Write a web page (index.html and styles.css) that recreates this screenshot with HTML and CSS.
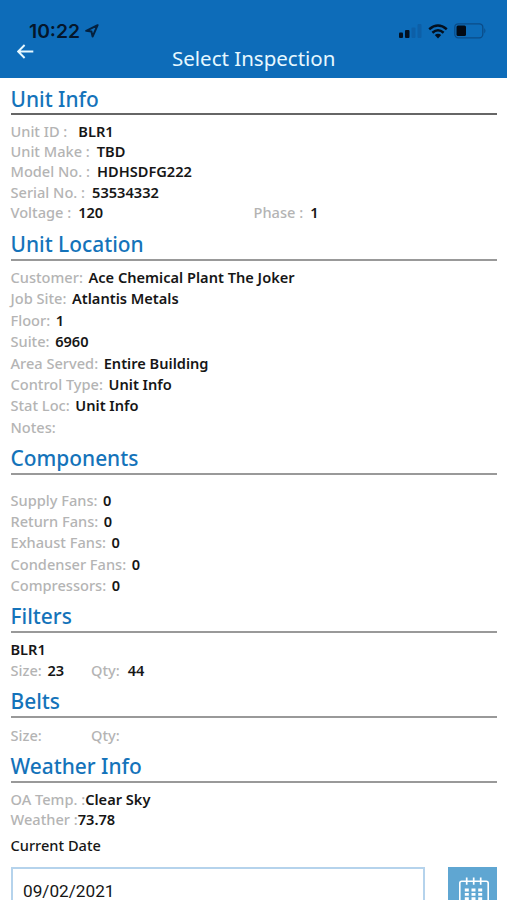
FILE: index.html
```html
<!DOCTYPE html>
<html lang="en">

<head>
    <meta charset="UTF-8">
    <meta name="viewport" content="width=device-width, initial-scale=1.0">
    <title>Select Inspection</title>
    <link rel="stylesheet" href="styles.css">
</head>

<body>
    <header class="header">
        <div class="status-bar">
            <span class="time">10:22</span>
            <svg class="location" width="14" height="14" viewBox="0 0 14 14">
                <path d="M12.6 1.2 L1.2 6.8 L6.4 7.4 L7.6 12.6 Z" fill="none" stroke="#04213f" stroke-width="2" stroke-linejoin="round" />
            </svg>
            <svg class="signal" width="23" height="14" viewBox="0 0 23 14">
                <rect x="0" y="8.5" width="4" height="5.5" rx="1" fill="#03101f" />
                <rect x="6" y="6" width="4.5" height="8" rx="1" fill="#03101f" />
                <rect x="12.5" y="3.5" width="4" height="10.5" rx="1" fill="#0d5fa7" />
                <rect x="18.5" y="0" width="4" height="14" rx="1" fill="#0d5fa7" />
            </svg>
            <svg class="wifi" width="20" height="15" viewBox="0 0 20 15">
                <g fill="none" stroke="#03101f" stroke-width="2.5">
                    <path d="M1.2 5.2 Q10 -2.2 18.8 5.2" />
                    <path d="M4.4 8.7 Q10 3.8 15.6 8.7" />
                </g>
                <path d="M6.8 11.1 Q10 8.6 13.2 11.1 L10 14.4 Z" fill="#03101f" />
            </svg>
            <svg class="battery" width="33" height="16" viewBox="0 0 33 16">
                <rect x="0.8" y="0.8" width="28" height="14" rx="3.5" fill="none" stroke="#0b4c88" stroke-width="1.3" />
                <rect x="2.5" y="2.6" width="9.5" height="10.4" rx="1.5" fill="#020a14" />
                <path d="M30.3 5 Q32.6 7.8 30.3 10.6 Z" fill="#0b4c88" />
            </svg>
        </div>
        <div class="nav-bar">
            <svg class="back" width="17" height="15" viewBox="0 0 17 15">
                <path d="M16.3 7.5 H1.6 M7.6 1 L1.2 7.5 L7.6 14" fill="none" stroke="#e6f8ff" stroke-width="1.9" />
            </svg>
            <h1>Select Inspection</h1>
        </div>
    </header>

    <main class="content">
        <section class="unit-info">
            <h2>Unit Info</h2>
            <p><span>Unit ID :</span><b class="wide">BLR1</b></p>
            <p><span>Unit Make :</span><b>TBD</b></p>
            <p><span>Model No. :</span><b>HDHSDFG222</b></p>
            <p><span>Serial No. :</span><b>53534332</b></p>
            <div class="columns">
                <p><span>Voltage :</span><b>120</b></p>
                <p><span>Phase :</span><b>1</b></p>
            </div>
        </section>

        <section class="unit-location">
            <h2>Unit Location</h2>
            <p><span>Customer:</span><b>Ace Chemical Plant The Joker</b></p>
            <p><span>Job Site:</span><b>Atlantis Metals</b></p>
            <p><span>Floor:</span><b>1</b></p>
            <p><span>Suite:</span><b>6960</b></p>
            <p><span>Area Served:</span><b>Entire Building</b></p>
            <p><span>Control Type:</span><b>Unit Info</b></p>
            <p><span>Stat Loc:</span><b>Unit Info</b></p>
            <p><span>Notes:</span></p>
        </section>

        <section class="components">
            <h2>Components</h2>
            <p><span>Supply Fans:</span><b>0</b></p>
            <p><span>Return Fans:</span><b>0</b></p>
            <p><span>Exhaust Fans:</span><b>0</b></p>
            <p><span>Condenser Fans:</span><b>0</b></p>
            <p><span>Compressors:</span><b>0</b></p>
        </section>

        <section class="filters">
            <h2>Filters</h2>
            <p><b class="title">BLR1</b></p>
            <div class="sizes">
                <p><span>Size:</span><b>23</b></p>
                <p><span>Qty:</span><b class="qty">44</b></p>
            </div>
        </section>

        <section class="belts">
            <h2>Belts</h2>
            <div class="sizes">
                <p><span>Size:</span></p>
                <p><span>Qty:</span></p>
            </div>
        </section>

        <section class="weather">
            <h2>Weather Info</h2>
            <p><span>OA Temp. :</span><b>Clear Sky</b></p>
            <p><span>Weather :</span><b>73.78</b></p>
        </section>

        <div class="date-label">Current Date</div>
        <div class="date-row">
            <div class="date-input">09/02/2021</div>
            <div class="date-button">
                <svg width="32" height="32" viewBox="0 0 32 32">
                    <rect x="1.8" y="5.3" width="28.4" height="26" rx="2" fill="none" stroke="#fff" stroke-width="1.6" />
                    <path d="M8.7 1.5 V8.8 M15.7 1.5 V8.8 M22.7 1.5 V8.8" stroke="#fff" stroke-width="1.7" />
                    <path d="M6.8 14 H24.5 M6.8 18.3 H24.5 M6.8 22.6 H24.5" stroke="#fff" stroke-width="2.8" stroke-dasharray="4 2.7" />
                </svg>
            </div>
        </div>
    </main>
</body>

</html>
```

FILE: styles.css
```css
* {
    box-sizing: border-box;
}

body {
    margin: 0;
    height: 900px;
    overflow: hidden;
    background-color: #fff;
    font-family: "Noto Sans", sans-serif;
    font-size: 14.6px;
    color: #161616;
}

.header {
    height: 78px;
    background-color: #0d6cb9;
    padding-top: 20px;
}

.status-bar {
    display: flex;
    align-items: center;
    height: 22px;
    padding: 0 20px 0 29px;
}

.time {
    font-family: Inter, sans-serif;
    font-size: 19.3px;
    font-weight: 600;
    color: #04162b;
}

.location {
    margin-left: 5px;
}

.signal {
    margin-left: auto;
}

.wifi {
    margin-left: 6px;
}

.battery {
    margin-left: 6px;
}

.nav-bar {
    display: flex;
    padding-left: 17px;
}

.back {
    margin-top: 2px;
}

h1 {
    margin: 2px 0 0 138px;
    font-size: 20.5px;
    font-weight: 400;
    line-height: 28px;
    color: #e6f8ff;
}

.content {
    padding: 7px 10px 0 10.5px;
}

h2 {
    margin: 0 0 6px;
    padding-bottom: 1px;
    font-size: 20.9px;
    font-weight: 500;
    line-height: 28px;
    color: #1473ba;
    border-bottom: 2px solid #999;
}

p {
    display: flex;
    margin: 0;
    line-height: 21.4px;
}

p span {
    font-weight: 500;
    color: #b4b4b4;
}

b {
    margin-left: 5.6px;
    font-weight: 600;
}

b.title {
    margin-left: 0;
}

b.qty {
    margin-left: 8px;
}

.unit-info {
    height: 145px;
}

.unit-info h2 {
    padding-bottom: 0;
    border-color: #666;
}

.unit-info p {
    line-height: 20.2px;
}

.unit-info b {
    margin-left: 7px;
}

.unit-info b.wide {
    margin-left: 11px;
}

.columns {
    display: grid;
    grid-template-columns: 243px 1fr;
}

.unit-location {
    height: 214px;
}

.components {
    height: 158px;
}

.components h2 {
    margin-bottom: 14.5px;
}

.filters {
    height: 85px;
}

.sizes {
    display: grid;
    grid-template-columns: 80.5px 1fr;
}

.belts {
    height: 65px;
}

.belts h2 {
    margin-bottom: 7px;
}

.weather p {
    line-height: 20.2px;
}

.weather b {
    margin-left: 0;
}

.date-label {
    margin-top: 6px;
    font-weight: 500;
    line-height: 20px;
}

.date-row {
    display: flex;
    justify-content: space-between;
    margin-top: 12px;
}

.date-input {
    width: 414px;
    height: 50px;
    padding: 12.6px 0 0 10.5px;
    border: 2px solid #b5d3ec;
    font-family: Roboto, sans-serif;
    font-size: 17.2px;
    line-height: 18px;
}

.date-button {
    width: 49px;
    height: 50px;
    padding: 8.5px 0 0 9.5px;
    background-color: #5fa6d2;
}
```
